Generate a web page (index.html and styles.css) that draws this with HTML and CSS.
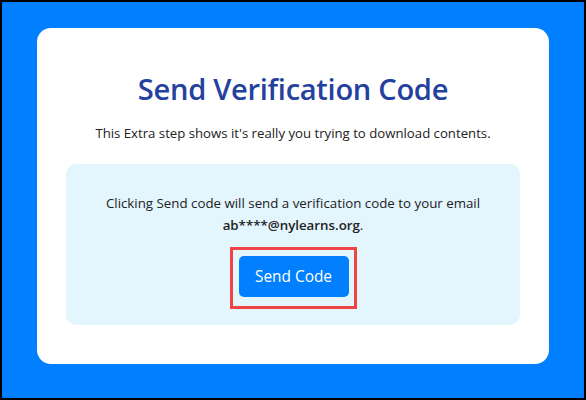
FILE: index.html
```html
<!DOCTYPE html>
<html>
<head>
<meta charset="utf-8">
<link rel="stylesheet" href="styles.css">
</head>
<body>
<div class="frame">
  <div class="card">
    <h1 class="title">Send Verification Code</h1>
    <p class="subtitle">This Extra step shows it's really you trying to download contents.</p>
    <div class="panel">
      <p class="message">Clicking Send code will send a verification code to your email <b>ab****@nylearns.org</b>.</p>
      <div class="highlight">
        <button class="send-btn">Send Code</button>
      </div>
    </div>
  </div>
</div>
</body>
</html>
```
FILE: styles.css
```css
html, body {
  margin: 0;
  padding: 0;
}
body {
  width: 586px;
  height: 400px;
  box-sizing: border-box;
  border: 2px solid #000;
  background: #0080ff;
  font-family: "Open Sans", "Noto Sans", sans-serif;
}
.frame {
  padding: 26px 35px 34px 35px;
}
.card {
  background: #fff;
  border-radius: 14px;
  height: 336px;
  box-sizing: border-box;
  padding: 43px 29px 0 29px;
  text-align: center;
}
.title {
  margin: 0;
  font-size: 29.1px;
  line-height: 37px;
  font-weight: 600;
  color: #2541a0;
  letter-spacing: -0.3px;
}
.subtitle {
  margin: 16px 0 0 0;
  font-size: 13.2px;
  line-height: 18px;
  color: #222;
}
.panel {
  margin-top: 22px;
  background: #e3f5fd;
  border-radius: 10px;
  height: 161px;
  box-sizing: border-box;
  padding: 28px 20px 0 20px;
}
.message {
  margin: 0;
  font-size: 13.3px;
  line-height: 22px;
  color: #222;
}
.message b {
  font-weight: 600;
}
.highlight {
  display: inline-block;
  margin-top: 11px;
  border: 3px solid #f04444;
  padding: 6px 5px 9px 6px;
}
.send-btn {
  display: block;
  width: 110px;
  height: 41px;
  border: none;
  border-radius: 5px;
  background: #0080ff;
  color: #fff;
  font-family: "Open Sans", "Noto Sans", sans-serif;
  font-size: 15.4px;
  padding: 0;
}
```
